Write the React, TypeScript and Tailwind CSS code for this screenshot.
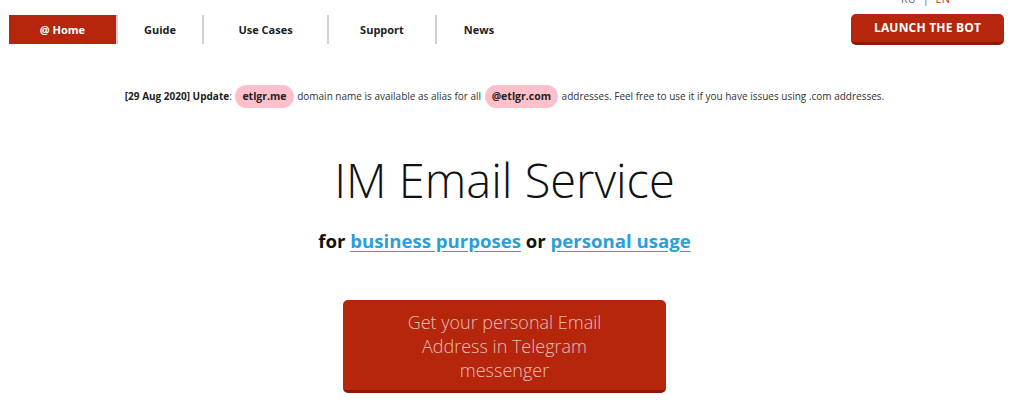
const red = 'bg-[#b5260c]'

const navItems = ['Guide', 'Use Cases', 'Support', 'News']

function Pill({ children }: { children: React.ReactNode }) {
  return (
    <span className="mx-px inline-block rounded-full bg-[#ffc0cb] px-[7px] py-[4px] text-[10.5px] leading-[15px] font-bold text-[#222]">
      {children}
    </span>
  )
}

export default function App() {
  return (
    <div className="h-[405px] w-[1009px] overflow-hidden bg-white font-['Open_Sans',sans-serif] text-[#222]">
      <header className="relative flex items-start justify-between pt-[15px] pr-[5px] pl-[9px]">
        <nav className="flex h-[29px] items-stretch text-[11px] font-bold">
          <a className={`flex w-[109px] items-center justify-center border-r-2 border-[#d0d0d0] pt-[2px] ${red} text-white`}>
            @ Home
          </a>
          {navItems.map((item, i) => (
            <a
              key={item}
              className={`flex items-center justify-center pt-[2px] ${
                i < navItems.length - 1 ? 'border-r-2 border-[#d0d0d0]' : ''
              } ${['w-[86px]', 'w-[125px]', 'w-[108px]', 'w-[84px]'][i]}`}
            >
              {item}
            </a>
          ))}
        </nav>
        <div className="absolute top-[-9px] right-[59px] text-[11px] text-[#666]">
          RU <span className="mx-1">|</span> <span className="text-[#d0341a]">EN</span>
        </div>
        <button className={`-mt-px h-[31px] w-[153px] rounded-[5px] border-b-[3px] border-[#8a1a06] ${red} text-[12px] font-bold tracking-[0.2px] text-white`}>
          LAUNCH THE BOT
        </button>
      </header>

      <p className="mt-[39px] text-center text-[10px] leading-[24px] text-[#333]">
        <span className="font-bold text-[#222]">[29 Aug 2020] Update</span>: <Pill>etlgr.me</Pill> domain name
        is available as alias for all <Pill>@etlgr.com</Pill> addresses. Feel free to use it if you have issues
        using .com addresses.
      </p>

      <h1 className="mt-[42px] text-center text-[47px] leading-[60px] font-light text-[#111]">IM Email Service</h1>

      <p className="mt-[19px] text-center text-[18.6px] leading-[24px] font-bold text-[#111]">
        for{' '}
        <a className="text-[#2a9fd8] underline underline-offset-[3px]">business purposes</a> or{' '}
        <a className="text-[#2a9fd8] underline underline-offset-[3px]">personal usage</a>
      </p>

      <div className="mt-[47px] flex justify-center">
        <button
          className={`w-[323px] rounded-[5px] border-b-[3px] border-[#8a1a06] ${red} px-[55px] pt-[10px] pb-[8px] text-[18px] leading-[24px] font-light text-white/70`}
        >
          Get your personal Email Address in Telegram messenger
        </button>
      </div>
    </div>
  )
}
